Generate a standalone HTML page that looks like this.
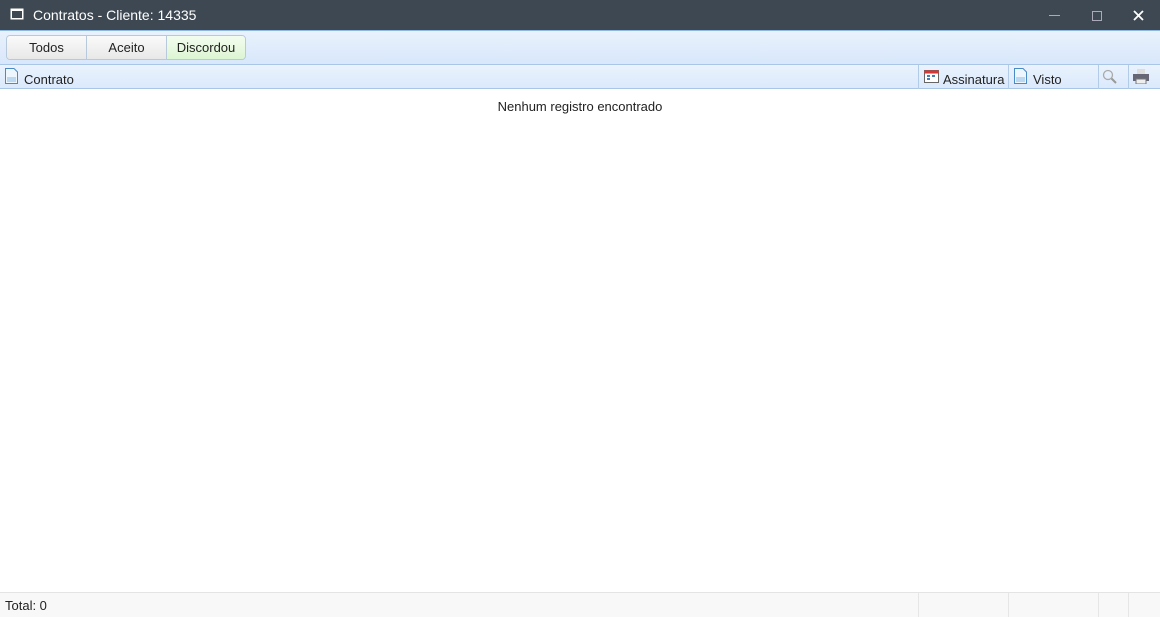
<!DOCTYPE html>
<html><head><style>
*{box-sizing:border-box;margin:0;padding:0}
body{width:1160px;height:617px;overflow:hidden;font-family:"Liberation Sans",sans-serif;font-size:13px;color:#222;background:#fff;position:relative}
.title{position:absolute;left:0;top:0;width:1160px;height:30px;background:#3d4852;color:#fff;font-size:14px}
.title .t{position:absolute;left:33px;top:7px}
.tb{position:absolute;left:0;top:30px;width:1160px;height:34px;background:linear-gradient(#e9f2fd,#d8e7fb);border-top:1px solid #8fb8e0}
.btns{position:absolute;left:6px;top:4px;height:25px;display:flex;border:1px solid #b8c9dc;border-radius:4px;overflow:hidden}
.btns div{height:23px;line-height:23px;text-align:center;background:linear-gradient(#fafafa,#e8e8e8);border-right:1px solid #b8c9dc;font-size:13px}
.hdr{position:absolute;left:0;top:64px;width:1160px;height:25px;background:linear-gradient(#eaf3fe,#dbe9fb);border-top:1px solid #a9c6e6;border-bottom:1px solid #a9c6e6}
.hdr .c{position:absolute;top:0;height:24px;border-left:1px solid #b2cbe6}
.hdr span{position:absolute;top:7px;font-size:13px}
.foot{position:absolute;left:0;top:592px;width:1160px;height:25px;background:#f8f8f8;border-top:1px solid #e4e4e4}
.foot .c{position:absolute;top:0;height:24px;border-left:1px solid #e6e6e6}
</style></head><body>
<div class="title">
<svg style="position:absolute;left:10px;top:8px" width="14" height="12"><rect x="0.5" y="0.5" width="13" height="11" fill="#fff"/><rect x="2" y="3" width="10" height="7" fill="#3d4852"/></svg>
<span class="t">Contratos - Cliente: 14335</span>
<div style="position:absolute;left:1049px;top:15px;width:11px;height:1px;background:#aab"></div>
<div style="position:absolute;left:1092px;top:11px;width:10px;height:10px;border:1px solid #aab"></div>
<svg style="position:absolute;left:1133px;top:10px" width="11" height="11"><path d="M1 1L10 10M10 1L1 10" stroke="#fff" stroke-width="1.8"/></svg>
</div>
<div class="tb"><div class="btns">
<div style="width:80px">Todos</div><div style="width:80px">Aceito</div><div style="width:78px;border-right:none;background:linear-gradient(#f4fdf0,#dcf5d2)">Discordou</div>
</div></div>
<div class="hdr">
<svg style="position:absolute;left:5px;top:3px" width="13" height="16"><path d="M0.5 0.5H9L12.5 4V15.5H0.5Z" fill="#eef6fd" stroke="#4a8ac7"/><rect x="2" y="9" width="9" height="5" fill="#bcd8f0"/></svg>
<span style="left:24px;top:7px">Contrato</span>
<div class="c" style="left:918px"></div>
<svg style="position:absolute;left:924px;top:3px" width="15" height="15"><rect x="0.5" y="2.5" width="14" height="12" fill="#fff" stroke="#666"/><rect x="0.5" y="2.5" width="14" height="3" fill="#d33"/><rect x="3" y="7" width="3" height="2" fill="#4a7ab8"/><rect x="8" y="7" width="3" height="2" fill="#4a7ab8"/><rect x="3" y="10" width="3" height="2" fill="#4a7ab8"/></svg>
<span style="left:943px;top:7px">Assinatura</span>
<div class="c" style="left:1008px"></div>
<svg style="position:absolute;left:1014px;top:3px" width="13" height="16"><path d="M0.5 0.5H9L12.5 4V15.5H0.5Z" fill="#eef6fd" stroke="#4a8ac7"/><rect x="2" y="9" width="9" height="5" fill="#bcd8f0"/></svg>
<span style="left:1033px;top:7px">Visto</span>
<div class="c" style="left:1098px"></div>
<svg style="position:absolute;left:1102px;top:4px" width="16" height="16"><circle cx="6" cy="6" r="4.5" fill="none" stroke="#aaa" stroke-width="1.3"/><path d="M9.5 9.5L14 14" stroke="#999" stroke-width="2"/></svg>
<div class="c" style="left:1128px"></div>
<svg style="position:absolute;left:1133px;top:4px" width="16" height="15"><rect x="4" y="0" width="8" height="5" fill="#ddd"/><rect x="0" y="5" width="16" height="7" fill="#667"/><rect x="3" y="10" width="10" height="5" fill="#eee" stroke="#777"/></svg>
</div>
<div style="position:absolute;left:0;width:1160px;top:99px;text-align:center">Nenhum registro encontrado</div>
<div class="foot">
<span style="position:absolute;left:5px;top:5px">Total: 0</span>
<div class="c" style="left:918px"></div><div class="c" style="left:1008px"></div><div class="c" style="left:1098px"></div><div class="c" style="left:1128px"></div>
</div>
</body></html>
